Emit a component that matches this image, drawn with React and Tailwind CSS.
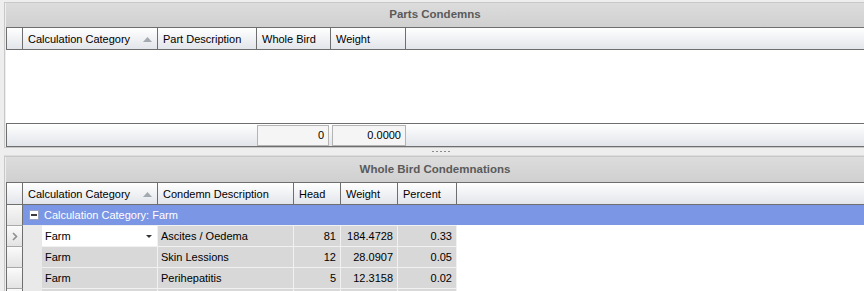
import React from "react";

const topCols = [
  { label: "Calculation Category", w: "w-[135px]", sort: true },
  { label: "Part Description", w: "w-[99px]" },
  { label: "Whole Bird", w: "w-[74px]" },
  { label: "Weight", w: "w-[75px]" },
];

const bottomCols = [
  { label: "Calculation Category", w: "w-[135px]", sort: true },
  { label: "Condemn Description", w: "w-[136px]" },
  { label: "Head", w: "w-[47px]" },
  { label: "Weight", w: "w-[57px]" },
  { label: "Percent", w: "w-[59px]" },
];

const rows = [
  { cat: "Farm", desc: "Ascites / Oedema", head: "81", weight: "184.4728", pct: "0.33", active: true },
  { cat: "Farm", desc: "Skin Lessions", head: "12", weight: "28.0907", pct: "0.05" },
  { cat: "Farm", desc: "Perihepatitis", head: "5", weight: "12.3158", pct: "0.02" },
  { cat: "", desc: "", head: "", weight: "", pct: "" },
];

function Title({ children, h }) {
  return (
    <div className={`${h} flex items-center justify-center bg-gradient-to-b from-[#dcdcdc] to-[#d0d0d0] font-bold text-[11.5px] text-[#5a5a5a]`}>
      {children}
    </div>
  );
}

function SortArrow() {
  return (
    <svg width="9" height="5" viewBox="0 0 9 5" className="ml-auto mr-[5px]">
      <path d="M4.5 0 L9 5 L0 5 Z" fill="#a3a9b1" />
    </svg>
  );
}

function Header({ cols }) {
  return (
    <div className="flex h-[23px] border-t border-b border-l border-[#6e6e6e] bg-gradient-to-b from-[#ffffff] to-[#e2e5ea]">
      <div className="w-[16px] border-r border-[#6e6e6e]" />
      {cols.map((c) => (
        <div key={c.label} className={`${c.w} flex items-center pl-[5px] pt-[2px] border-r border-[#6e6e6e] whitespace-nowrap`}>
          {c.label}
          {c.sort && <SortArrow />}
        </div>
      ))}
    </div>
  );
}

function Cell({ w, right, white, children }) {
  return (
    <div
      className={`${w} h-full flex items-center border-t border-r border-[#f1f1f1] whitespace-nowrap ${
        right ? "justify-end pr-[4px]" : "pl-[3px]"
      } ${white ? "bg-white" : "bg-[#d8d8d8]"}`}
    >
      {children}
    </div>
  );
}

export default function App() {
  return (
    <div className="w-[864px] h-[291px] overflow-hidden bg-[#eeeeee] font-['Liberation_Sans',Arial,sans-serif] text-[11px] text-black pt-[2px] pl-[4px]">
      {/* Parts Condemns */}
      <div className="border-l border-t border-b border-[#c8c8c8] pl-[1px]">
        <Title h="h-[24px]">Parts Condemns</Title>
        <Header cols={topCols} />
        <div className="h-[73px] bg-white" />
        <div className="flex h-[24px] border-t border-b border-l border-[#6e6e6e] bg-gradient-to-b from-[#ffffff] to-[#e2e5ea] pt-[1px]">
          <div className="ml-[250px] w-[72px] h-[21px] border border-[#b4b4b4] bg-[#f5f5f5] flex items-center justify-end pr-[4px]">
            0
          </div>
          <div className="ml-[3px] w-[74px] h-[21px] border border-[#b4b4b4] bg-[#f5f5f5] flex items-center justify-end pr-[4px]">
            0.0000
          </div>
        </div>
      </div>

      {/* splitter */}
      <div className="h-[8px] flex items-center justify-center border-b border-[#dcdcdc]">
        <div className="flex gap-[2px] ml-[14px]">
          {[0, 1, 2, 3, 4].map((i) => (
            <div key={i} className="w-[2px] h-[1px] bg-[#8a8a8a]" />
          ))}
        </div>
      </div>

      {/* Whole Bird Condemnations */}
      <div className="border-l border-t border-[#c8c8c8] pl-[1px]">
        <Title h="h-[25px]">Whole Bird Condemnations</Title>
        <Header cols={bottomCols} />
        <div className="border-l border-[#6e6e6e]">
          <div className="flex h-[20px]">
            <div className="w-[16px] border-r border-[#6e6e6e] bg-gradient-to-b from-[#f8f8f8] to-[#e4e4e4]" />
            <div className="flex-1 bg-[#7b96e4] flex items-center pl-[6px] text-white">
              <div className="w-[10px] h-[10px] border border-[#9aa4bf] bg-white flex items-center justify-center">
                <div className="w-[6px] h-[2px] bg-[#3c3c3c]" />
              </div>
              <span className="ml-[5px]">Calculation Category: Farm</span>
            </div>
          </div>
          {rows.map((r, i) => (
            <div key={i} className="flex h-[21px]">
              <div className="w-[16px] h-full border-r border-t border-r-[#6e6e6e] border-t-[#a9a9a9] bg-gradient-to-b from-[#fbfbfb] to-[#e3e3e3] flex items-center justify-center">
                {r.active && (
                  <svg width="6" height="9" viewBox="0 0 6 9">
                    <path d="M1 1 L4.5 4.5 L1 8" stroke="#8e8e8e" strokeWidth="1.6" fill="none" />
                  </svg>
                )}
              </div>
              <div className="w-[19px] h-full bg-[#e9e9e9]" />
              <div
                className={`w-[116px] h-full flex items-center border-t border-r border-[#f1f1f1] pl-[3px] pr-[5px] ${
                  r.active ? "bg-white" : "bg-[#d8d8d8]"
                }`}
              >
                {r.cat}
                {r.active && (
                  <svg width="6" height="3" viewBox="0 0 6 3" className="ml-auto">
                    <path d="M0 0 L6 0 L3 3 Z" fill="#333333" />
                  </svg>
                )}
              </div>
              <Cell w="w-[136px]">{r.desc}</Cell>
              <Cell w="w-[47px]" right>{r.head}</Cell>
              <Cell w="w-[57px]" right>{r.weight}</Cell>
              <Cell w="w-[59px]" right>{r.pct}</Cell>
              <div className="flex-1 h-full bg-white" />
            </div>
          ))}
        </div>
      </div>
    </div>
  );
}
